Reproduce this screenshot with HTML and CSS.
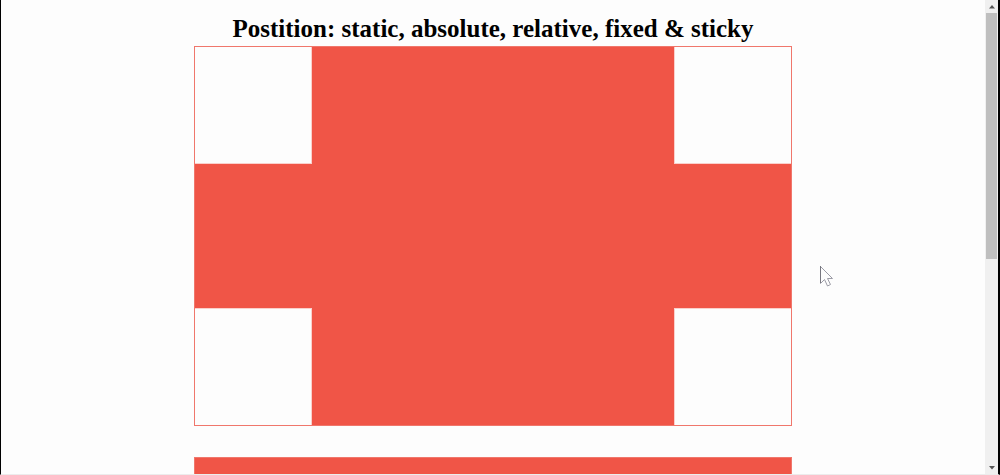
FILE: index.html
```html
<!DOCTYPE html>
<html lang="en">
<head>
<meta charset="utf-8">
<meta name="viewport" content="width=device-width, initial-scale=1">
<title>Position</title>
<link rel="stylesheet" href="styles.css">
</head>
<body>
<div class="window">
  <main class="page">
    <h1 class="title">Postition: static, absolute, relative, fixed &amp; sticky</h1>
    <section class="parent">
      <div class="child"></div>
      <div class="child child-right"></div>
      <div class="child child-bottom"></div>
      <div class="child child-right child-bottom"></div>
    </section>
    <section class="parent"></section>
  </main>
  <div class="scrollbar">
    <button class="arrow" aria-label="Scroll up"><svg width="6" height="4" viewBox="0 0 6 4"><path d="M3 0 6 3.500H0z" fill="#555"/></svg></button>
    <div class="track"><div class="thumb"></div></div>
    <button class="arrow" aria-label="Scroll down"><svg width="6" height="4" viewBox="0 0 6 4"><path d="M0 0h6L3 3.500z" fill="#555"/></svg></button>
  </div>
</div>
<svg class="pointer" width="15" height="23" viewBox="0 0 15 23"><path d="M1.500 1.500v17l4-4 3 6.500 3-1.500-3-6h5z" fill="#fdfdfd" stroke="#9c9ca6" stroke-width="1"/><path d="M1.500 1v17" stroke="#77777f" stroke-width="1"/></svg>
</body>
</html>
```
FILE: styles.css
```css
* {
  box-sizing: border-box;
}

body {
  margin: 0;
  background: #fdfdfd;
  font-family: "Liberation Serif", "Times New Roman", serif;
  color: #000;
}

.window {
  display: flex;
  height: 100vh;
  overflow: hidden;
  border-left: 1px solid #000;
  border-right: 2px solid #000;
  border-bottom: 1px solid #ececec;
}

.page {
  flex: 1;
  display: flex;
  flex-direction: column;
  align-items: center;
  overflow: hidden;
  padding-top: 14px;
}

.title {
  margin: 0 0 3px;
  font-size: 25px;
  line-height: 29px;
  text-align: center;
}

.parent {
  flex: none;
  display: grid;
  grid-template-columns: 117px 117px;
  grid-template-rows: 117px 117px;
  justify-content: space-between;
  align-content: space-between;
  width: 100%;
  max-width: 598px;
  height: 380px;
  margin-bottom: 31px;
  border: 1px solid #f0776c;
  background: #f05547;
}

.child {
  background: #fdfdfd;
  border-right: 1px solid #fad0cc;
  border-bottom: 1px solid #fad0cc;
}

.child-right {
  border-right: 0;
  border-left: 1px solid #fad0cc;
}

.child-bottom {
  border-bottom: 0;
  border-top: 1px solid #fad0cc;
}

.scrollbar {
  display: flex;
  flex-direction: column;
  width: 13px;
  background: #f0f0f0;
}

.arrow {
  display: flex;
  align-items: center;
  justify-content: center;
  height: 13px;
  padding: 0;
  border: 0;
  background: #f0f0f0;
}

.track {
  flex: 1;
  padding: 0 1px;
}

.thumb {
  height: 55%;
  background: #bfbfbf;
}

.pointer {
  position: absolute;
  left: 819px;
  top: 265px;
}
```
